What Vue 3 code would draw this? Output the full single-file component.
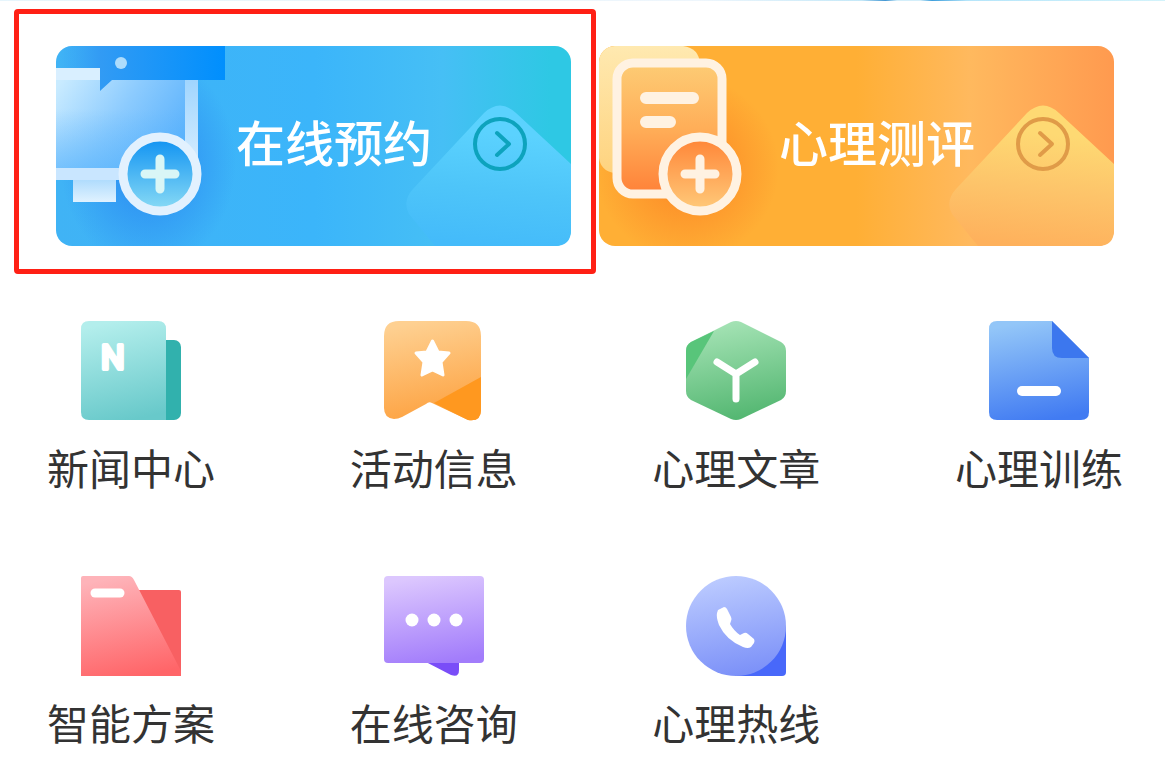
<template>
  <main class="home">
    <div class="home__edge"></div>

    <nav class="banners" aria-label="服务">
      <a
        v-for="b in banners"
        :key="b.id"
        href="#"
        class="banner"
        :class="[`banner--${b.id}`, { 'banner--marked': b.marked }]"
      >
        <svg class="banner__peak" viewBox="0 0 170 200" aria-hidden="true">
          <defs>
            <linearGradient :id="`peak-${b.id}`" x1="0.6" y1="0.2" x2="0.5" y2="1">
              <stop offset="0" :stop-color="b.peak[0]" />
              <stop offset="0.5" :stop-color="b.peak[1]" />
              <stop offset="1" :stop-color="b.peak[2]" />
            </linearGradient>
          </defs>
          <path
            d="M8 168Q1 155 12 143L83 67Q99 52 115 67L170 118V184Q170 200 154 200H34Z"
            :fill="`url(#peak-${b.id})`"
          />
        </svg>

        <svg v-if="b.id === 'booking'" class="banner__art" viewBox="0 0 180 200" aria-hidden="true">
          <defs>
            <linearGradient id="screen" x1="0" y1="0.2" x2="1" y2="0.7">
              <stop offset="0" stop-color="#c9ebff" />
              <stop offset="0.5" stop-color="#8ccbfe" />
              <stop offset="1" stop-color="#59b1fc" />
            </linearGradient>
            <linearGradient id="screenShade" x1="0" y1="0" x2="0" y2="1">
              <stop offset="0.4" stop-color="#58b4fc" stop-opacity="0" />
              <stop offset="1" stop-color="#58b4fc" stop-opacity="0.6" />
            </linearGradient>
            <linearGradient id="bubbleFade" x1="0" y1="0" x2="1" y2="0">
              <stop offset="0" stop-color="#329bf4" stop-opacity="0" />
              <stop offset="1" stop-color="#329bf4" />
            </linearGradient>
            <linearGradient id="bubble" x1="0" y1="0" x2="1" y2="0">
              <stop offset="0" stop-color="#329bf4" />
              <stop offset="1" stop-color="#008ffd" />
            </linearGradient>
            <linearGradient id="post" x1="0" y1="0" x2="0" y2="1">
              <stop offset="0" stop-color="#a0d5fe" />
              <stop offset="1" stop-color="#e0f1ff" />
            </linearGradient>
            <linearGradient id="stand" x1="0" y1="0" x2="0" y2="1">
              <stop offset="0" stop-color="#b0dcfd" />
              <stop offset="1" stop-color="#e0f2ff" />
            </linearGradient>
            <linearGradient id="addBlue" x1="0" y1="0" x2="0" y2="1">
              <stop offset="0" stop-color="#0d91f2" />
              <stop offset="1" stop-color="#8bdcf5" />
            </linearGradient>
            <radialGradient id="glowBlue">
              <stop offset="0.3" stop-color="#2f94f3" />
              <stop offset="1" stop-color="#2f94f3" stop-opacity="0" />
            </radialGradient>
          </defs>
          <ellipse cx="92" cy="116" rx="88" ry="108" fill="url(#glowBlue)" />
          <path d="M0 22H129V124H0Z" fill="url(#screen)" />
          <path d="M0 22H129V124H0Z" fill="url(#screenShade)" />
          <path d="M0 22H44V34H0Z" fill="#d9efff" />
          <path d="M129 34H142V134H129Z" fill="url(#post)" />
          <path d="M0 122H70V134H0Z" fill="#c9e6ff" />
          <path d="M17 134H60V156H17Z" fill="url(#stand)" />
          <path d="M44 0H169V34H56L44 45Z" fill="url(#bubble)" />
          <path d="M4 0H44V22H4Z" fill="url(#bubbleFade)" />
          <circle cx="65" cy="17" r="6" fill="#addcfc" />
          <circle cx="104" cy="128" r="37" fill="url(#addBlue)" stroke="#e2f1fe" stroke-width="9" />
          <path d="M104 113V143M89 128H119" stroke="#d9f6f6" stroke-width="9" stroke-linecap="round" />
        </svg>

        <svg v-else class="banner__art" viewBox="0 0 180 200" aria-hidden="true">
          <defs>
            <linearGradient id="backSheet" x1="0" y1="0" x2="0" y2="1">
              <stop offset="0" stop-color="#ffe9b0" />
              <stop offset="1" stop-color="#fed37f" />
            </linearGradient>
            <linearGradient id="sheet" x1="0" y1="0" x2="0" y2="1">
              <stop offset="0" stop-color="#fdcc75" />
              <stop offset="0.5" stop-color="#ffae58" />
              <stop offset="1" stop-color="#ff8138" />
            </linearGradient>
            <linearGradient id="addOrange" x1="0" y1="0" x2="0" y2="1">
              <stop offset="0" stop-color="#ff8436" />
              <stop offset="1" stop-color="#ffcb7b" />
            </linearGradient>
            <radialGradient id="glowOrange">
              <stop offset="0.3" stop-color="#fd9029" />
              <stop offset="1" stop-color="#fd9029" stop-opacity="0" />
            </radialGradient>
          </defs>
          <ellipse cx="88" cy="122" rx="92" ry="92" fill="url(#glowOrange)" />
          <path d="M0 16Q0 0 16 0H84Q100 2 101 18V127H15Q2 125 0 112Z" fill="url(#backSheet)" />
          <rect x="18" y="17" width="105" height="131" rx="16" fill="url(#sheet)" stroke="#fff2e2" stroke-width="9" />
          <path d="M47 52H94M47 76H71" stroke="#fff2e2" stroke-width="12" stroke-linecap="round" />
          <circle cx="101" cy="128" r="37" fill="url(#addOrange)" stroke="#fff2e2" stroke-width="9" />
          <path d="M101 113V143M86 128H116" stroke="#fff2e2" stroke-width="9" stroke-linecap="round" />
        </svg>

        <span class="banner__title">{{ b.title }}</span>

        <svg class="banner__go" viewBox="0 0 54 54" fill="none" aria-hidden="true">
          <circle cx="27" cy="27" r="25" stroke="currentColor" stroke-width="4" />
          <path d="M24 16L36 27L24 38" stroke="currentColor" stroke-width="4" stroke-linecap="round" stroke-linejoin="round" />
        </svg>
      </a>
    </nav>

    <nav class="tiles" aria-label="栏目">
      <a v-for="t in tiles" :key="t.id" href="#" class="tile">
        <svg class="tile__icon" viewBox="0 0 100 100" aria-hidden="true">
          <defs>
            <linearGradient :id="`tile-${t.id}`" x1="0.4" y1="0" x2="0.6" y2="1">
              <stop offset="0" :stop-color="t.from" />
              <stop offset="1" :stop-color="t.to" />
            </linearGradient>
          </defs>
          <g v-if="t.id === 'news'">
            <rect x="60" y="19" width="40" height="80" rx="7" fill="#31b1ad" />
            <path d="M8 0H77Q85 0 85 8V99H8Q0 99 0 91V8Q0 0 8 0Z" :fill="`url(#tile-${t.id})`" />
            <text x="20" y="48" class="tile__letter">N</text>
          </g>
          <g v-else-if="t.id === 'activity'">
            <path
              d="M15 0H82Q97 0 97 15V89Q97 101 84 99L48 82Q45 80 42 83L18 96Q14 98 10 98Q0 97 0 87V15Q0 0 15 0Z"
              :fill="`url(#tile-${t.id})`"
            />
            <path d="M97 56V89Q97 101 84 99L50 82Z" fill="#ff981f" />
            <path
              d="M48.500 20L54 31L65 32L57 41L59 54L48.500 49L38 54L40 41L32 32L43 31Z"
              fill="#fff"
              stroke="#fff"
              stroke-width="3"
              stroke-linejoin="round"
            />
          </g>
          <g v-else-if="t.id === 'article'">
            <path
              d="M45 1Q50 -1 55 1L95 21Q100 24 100 30V70Q100 76 95 79L55 98Q50 100 45 98L5 79Q0 76 0 70V30Q0 24 5 21Z"
              :fill="`url(#tile-${t.id})`"
            />
            <path d="M28 10L5 21Q0 24 0 30V58Z" fill="#58c57a" />
            <path d="M31 41L50 53L69 41M50 53V78" class="tile__line" stroke-width="7" />
          </g>
          <g v-else-if="t.id === 'training'">
            <path
              d="M8 0H63L100 37V91Q100 99 92 99H8Q0 99 0 91V8Q0 0 8 0Z"
              :fill="`url(#tile-${t.id})`"
            />
            <path d="M63 0L100 37H73Q63 37 63 27Z" fill="#3c77ee" />
            <path d="M33 70H67" class="tile__line" stroke-width="10" />
          </g>
          <g v-else-if="t.id === 'plan'">
            <path d="M40 14H98Q100 14 100 16V100H60Z" fill="#f86062" />
            <path d="M2 0H48Q51 0 53 4L100 95V100H0V2Q0 0 2 0Z" :fill="`url(#tile-${t.id})`" />
            <path d="M14 17H39" class="tile__line" stroke-width="9" />
          </g>
          <g v-else-if="t.id === 'consult'">
            <path d="M40 85H75V94Q75 102 67 99Z" fill="#7a4df8" />
            <rect width="100" height="87" rx="4" :fill="`url(#tile-${t.id})`" />
            <circle v-for="x in [28, 50, 72]" :key="x" :cx="x" cy="44" r="6.500" fill="#fff" />
          </g>
          <g v-else>
            <path d="M50 50H100V96Q100 100 96 100H50Z" fill="#4868fa" />
            <circle cx="50" cy="50" r="50" :fill="`url(#tile-${t.id})`" />
            <path
              d="M32 34L38 31Q40 31 41 33L45 41Q46 43 45 45L44 48Q48 55 54 59L58 57Q60 56 62 58L68 63Q69 65 68 67L65 71Q62 73 57 71Q40 64 33 49Q30 41 31 37Z"
              fill="#fff"
            />
          </g>
        </svg>
        <span class="tile__label">{{ t.label }}</span>
      </a>
    </nav>
  </main>
</template>

<script setup>
const banners = [
  { id: 'booking', title: '在线预约', marked: true, peak: ['#5bd2fe', '#4ec5f9', '#44bbfa'] },
  { id: 'assessment', title: '心理测评', marked: false, peak: ['#fed973', '#fdc46a', '#feb15c'] }
]

const tiles = [
  { id: 'news', label: '新闻中心', from: '#b3eeec', to: '#68c9ca' },
  { id: 'activity', label: '活动信息', from: '#fed091', to: '#fda13f' },
  { id: 'article', label: '心理文章', from: '#a5e3b5', to: '#52b670' },
  { id: 'training', label: '心理训练', from: '#93c6f8', to: '#417bf2' },
  { id: 'plan', label: '智能方案', from: '#feb3b9', to: '#ff6568' },
  { id: 'consult', label: '在线咨询', from: '#dcc7fe', to: '#a27cfb' },
  { id: 'hotline', label: '心理热线', from: '#bccbff', to: '#7b90f8' }
]
</script>

<style>
body {
  margin: 0;
  background: #fff;
}
</style>

<style scoped>
.home {
  font-family: 'Noto Sans CJK SC', sans-serif;
  color: #333;
}

.home__edge {
  height: 1px;
  background: linear-gradient(
    90deg,
    #e6f5fc 0%,
    #eef6fc 60%,
    #c4e8f8 74%,
    #4497d3 76%,
    #d3eefa 77%,
    #d3eefa 79%,
    #3f9fdc 80%,
    #b5e5fa 83%,
    #d3f3fb 100%
  );
}

.banners {
  display: grid;
  grid-template-columns: 1fr 1fr;
  gap: 28px;
  padding: 45px 51px 0 56px;
}

.banner {
  position: relative;
  display: flex;
  align-items: center;
  height: 200px;
  border-radius: 16px;
  color: #fff;
  text-decoration: none;
}

.banner--booking {
  background: linear-gradient(90deg, #40b3f5 0%, #3bb5fa 50%, #46bff5 75%, #2ec8e4 96%);
}

.banner--assessment {
  background: linear-gradient(90deg, #ffaf35 0%, #ffaf35 50%, #ffb95e 72%, #ff9a4f 100%);
}

/* red frame laid over the highlighted entry */
.banner--marked::after {
  content: '';
  position: absolute;
  inset: -37px -25px -28px -42px;
  border: 5px solid #ff2015;
  border-radius: 4px;
  pointer-events: none;
}

.banner__peak {
  position: absolute;
  right: 0;
  bottom: 0;
  width: 170px;
  height: 200px;
}

.banner__art {
  flex: none;
  width: 180px;
  height: 200px;
  border-radius: 16px 0 0 16px;
}

.banner__title {
  position: relative;
  margin-bottom: 10px;
  font-size: 49px;
  font-weight: 500;
  line-height: 72px;
  white-space: nowrap;
}

.banner__go {
  position: relative;
  flex: none;
  width: 54px;
  height: 54px;
  margin-left: auto;
  margin-right: 44px;
  margin-bottom: 5px;
}

.banner--booking .banner__go {
  color: #0da3bd;
}

.banner--assessment .banner__go {
  color: #e09b48;
}

.tiles {
  display: grid;
  grid-template-columns: repeat(4, max-content);
  justify-content: space-between;
  row-gap: 79px;
  padding: 75px 42px 0 47px;
}

.tile {
  display: flex;
  flex-direction: column;
  align-items: center;
  gap: 16px;
  color: inherit;
  text-decoration: none;
}

.tile__icon {
  width: 100px;
  height: 100px;
}

.tile__letter {
  font-family: Roboto, sans-serif;
  font-size: 33px;
  font-weight: 400;
  fill: #fff;
  stroke: #fff;
  stroke-width: 4px;
  stroke-linejoin: round;
}

.tile__line {
  fill: none;
  stroke: #fff;
  stroke-linecap: round;
  stroke-linejoin: round;
}

.tile__label {
  font-size: 42px;
  line-height: 60px;
  white-space: nowrap;
}
</style>
